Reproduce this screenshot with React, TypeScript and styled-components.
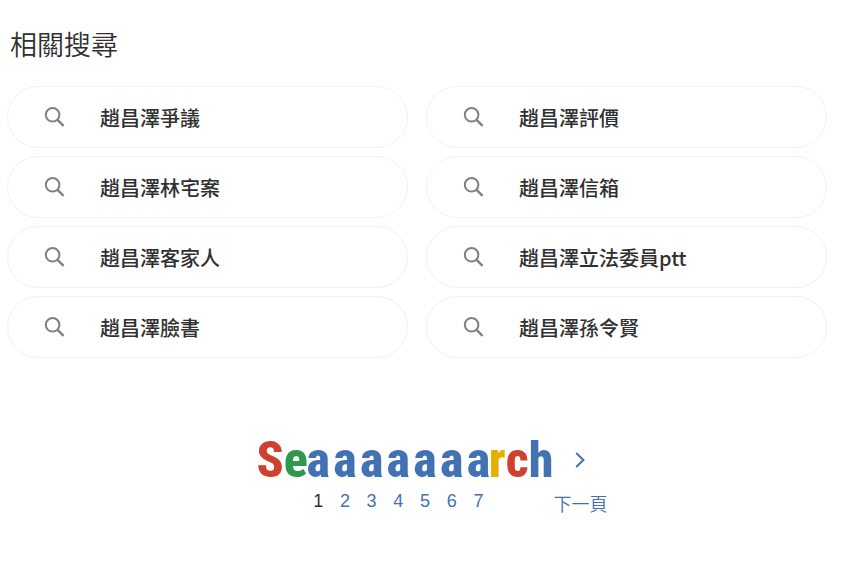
import React from "react";
import styled, { createGlobalStyle } from "styled-components";

const cjk = '"Noto Sans CJK TC", sans-serif';
const blue = "#4272b4";

const GlobalStyle = createGlobalStyle`
  *, *::before, *::after { box-sizing: border-box; }
  body {
    margin: 0;
    background: #ffffff;
    font-family: ${cjk};
  }
`;

const Page = styled.main`
  padding: 24px 17px 40px 7px;
`;

const Heading = styled.h2`
  margin: 0 0 22px;
  padding-left: 3px;
  font-size: 27px;
  line-height: 40px;
  font-weight: 350;
  color: #303030;
`;

const SuggestionGrid = styled.ul`
  display: grid;
  grid-template-columns: 1fr 1fr;
  gap: 8px 18px;
  margin: 0;
  padding: 0;
  list-style: none;
`;

const Suggestion = styled.a`
  display: flex;
  align-items: center;
  gap: 35px;
  height: 62px;
  padding: 0 36px;
  border: 1px solid #f2f2f2;
  border-radius: 31px;
  color: #303030;
  font-size: 20px;
  line-height: 30px;
  font-weight: 500;
  text-decoration: none;
`;

const SuggestionText = styled.span`
  padding-top: 2px;
`;

const SearchIcon = () => (
  <svg width="21" height="21" viewBox="0 0 21 21" fill="none" stroke="#808080" strokeWidth="2" aria-hidden="true">
    <circle cx="8.6" cy="7.8" r="6.8" />
    <path d="M13.3 12.6 19.6 18.9" strokeWidth="2.3" />
  </svg>
);

const Pager = styled.nav`
  display: flex;
  justify-content: center;
  margin: 74px 0 0 30px;
`;

const PageList = styled.ol`
  display: grid;
  grid-template-columns: repeat(7, 1fr);
  width: 187px;
  margin: 0 -3px;
  padding: 0;
  list-style: none;
`;

const Letter = styled.span<{ $color: string }>`
  display: inline-block;
  color: ${(p) => p.$color};
  font-family: "Roboto Condensed", "Liberation Sans Narrow", "Liberation Sans", sans-serif;
  font-size: 50px;
  line-height: 56px;
  font-weight: 800;
`;

const PageCell = styled.a<{ $current?: boolean }>`
  display: flex;
  flex-direction: column;
  align-items: center;
  color: ${(p) => (p.$current ? "#303030" : blue)};
  font-family: "Liberation Sans", Arial, sans-serif;
  font-size: 18px;
  line-height: 26px;
  text-decoration: none;
`;

const NextLink = styled.a`
  display: flex;
  flex-direction: column;
  align-items: center;
  color: ${blue};
  font-size: 18px;
  line-height: 30px;
  font-weight: 350;
  text-decoration: none;
`;

const ChevronSlot = styled.span`
  display: flex;
  align-items: center;
  height: 56px;
`;

const queries = [
  "趙昌澤爭議", "趙昌澤評價",
  "趙昌澤林宅案", "趙昌澤信箱",
  "趙昌澤客家人", "趙昌澤立法委員ptt",
  "趙昌澤臉書", "趙昌澤孫令賢",
];

const pages = [1, 2, 3, 4, 5, 6, 7];

export default function App() {
  return (
    <Page>
      <GlobalStyle />
      <Heading>相關搜尋</Heading>
      <SuggestionGrid>
        {queries.map((query) => (
          <li key={query}>
            <Suggestion href="#">
              <SearchIcon />
              <SuggestionText>{query}</SuggestionText>
            </Suggestion>
          </li>
        ))}
      </SuggestionGrid>
      <Pager>
        <div>
          <Letter $color="#d0402f">S</Letter>
          <Letter $color="#30984e">e</Letter>
        </div>
        <PageList>
          {pages.map((page) => (
            <li key={page}>
              <PageCell href="#" $current={page === 1} aria-current={page === 1 ? "page" : undefined}>
                <Letter $color={blue}>a</Letter>
                {page}
              </PageCell>
            </li>
          ))}
        </PageList>
        <div>
          <Letter $color="#e5b100">r</Letter>
          <Letter $color="#d0402f">c</Letter>
          <Letter $color={blue}>h</Letter>
        </div>
        <NextLink href="#">
          <ChevronSlot>
            <svg width="10" height="16" viewBox="0 0 10 16" fill="none" stroke={blue} strokeWidth="2" aria-hidden="true">
              <path d="M1.2 1 8.4 8 1.2 15" />
            </svg>
          </ChevronSlot>
          下一頁
        </NextLink>
      </Pager>
    </Page>
  );
}
